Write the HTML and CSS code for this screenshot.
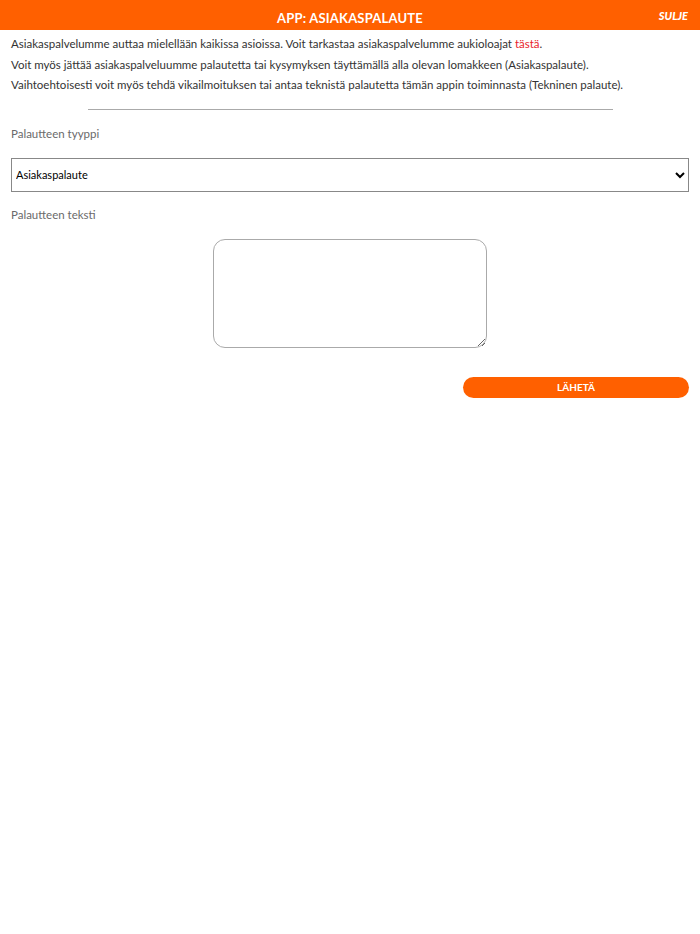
FILE: index.html
```html
<!DOCTYPE html>
<html>
<head>
    <title>App: Asiakaspalaute</title>
    <link rel="stylesheet" href="styles.css">
</head>
<body>
    <div class="topbar">
        <h1>APP: ASIAKASPALAUTE</h1>
        <a class="close" href="#">SULJE</a>
    </div>

    <div class="content">
        <p>Asiakaspalvelumme auttaa mielellään kaikissa asioissa. Voit tarkastaa asiakaspalvelumme aukioloajat <a class="link" href="#">tästä</a>.</p>
        <p>Voit myös jättää asiakaspalveluumme palautetta tai kysymyksen täyttämällä alla olevan lomakkeen (Asiakaspalaute).</p>
        <p>Vaihtoehtoisesti voit myös tehdä vikailmoituksen tai antaa teknistä palautetta tämän appin toiminnasta (Tekninen palaute).</p>
    </div>

    <hr>

    <form class="feedback">
        <label class="field-label" for="type">Palautteen tyyppi</label>
        <select id="type">
            <option>Asiakaspalaute</option>
            <option>Tekninen palaute</option>
        </select>

        <label class="field-label" for="text">Palautteen teksti</label>
        <div class="textarea-row">
            <textarea id="text"></textarea>
        </div>

        <div class="actions">
            <button type="button">LÄHETÄ</button>
        </div>
    </form>
</body>
</html>
```

FILE: styles.css
```css
:root {
    --orange: #ff6000;
    --text: #333;
    --muted: #6a6a6a;
}

body {
    margin: 0;
    font-family: 'Lato', 'Open Sans', sans-serif;
    color: var(--text);
    background: #fff;
}

.topbar {
    position: relative;
    height: 30px;
    background: var(--orange);
    display: flex;
    align-items: center;
    justify-content: center;
}

.topbar h1 {
    margin: 0;
    padding-top: 5px;
    color: #fff;
    font-size: 13px;
    font-weight: 700;
    letter-spacing: 0.2px;
}

.close {
    position: absolute;
    right: 12px;
    top: 9px;
    color: #fff;
    font-size: 11px;
    font-weight: 900;
    font-style: italic;
    text-decoration: none;
}

.content {
    padding: 4px 11px 0;
}

.content p {
    margin: 0;
    font-size: 11.5px;
    line-height: 20.5px;
}

.link {
    color: #e8242c;
    text-decoration: none;
}

hr {
    width: 75%;
    margin: 13px auto 16px;
    border: none;
    border-top: 1px solid #aaa;
}

.feedback {
    display: flex;
    flex-direction: column;
    padding: 0 11px;
}

.field-label {
    font-size: 11.5px;
    color: var(--muted);
    line-height: 16px;
}

select {
    margin: 16px 0 15px;
    height: 34px;
    padding: 0;
    font-family: 'Lato', sans-serif;
    font-size: 11px;
    color: #000;
    background: #fff;
    border: 1px solid #888;
    border-radius: 0;
}

.textarea-row {
    display: flex;
    justify-content: center;
    margin-top: 16px;
}

textarea {
    box-sizing: border-box;
    width: 274px;
    height: 109px;
    border: 1px solid #aaa;
    border-radius: 12px;
}

.actions {
    display: flex;
    justify-content: flex-end;
    margin-top: 29px;
}

button {
    width: 226px;
    height: 21px;
    background: var(--orange);
    color: #fff;
    border: none;
    border-radius: 11px;
    font-family: 'Lato', sans-serif;
    font-size: 10px;
    font-weight: 700;
    padding: 0;
}
```
